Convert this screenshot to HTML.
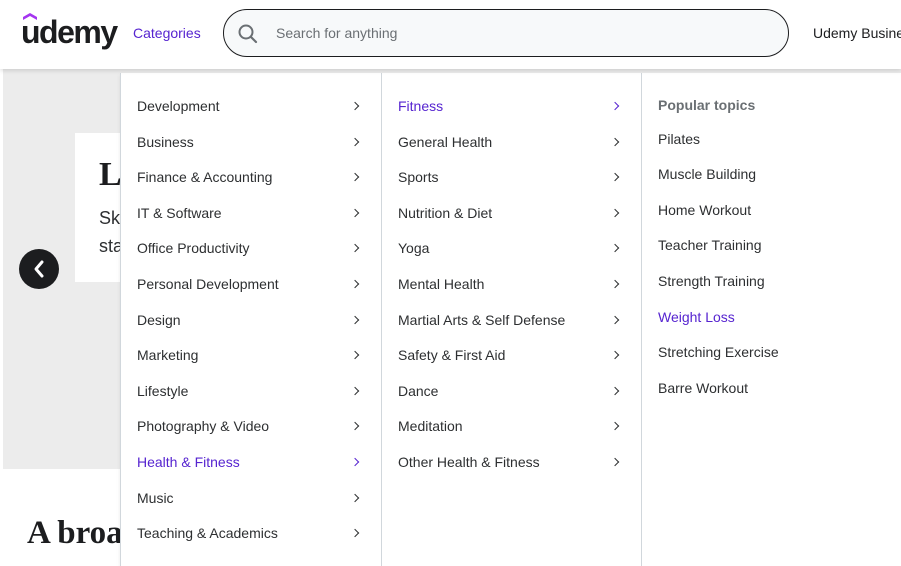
<!DOCTYPE html>
<html><head><meta charset="utf-8"><style>
*{margin:0;padding:0;box-sizing:border-box}
body{width:901px;height:566px;overflow:hidden;background:#fff;font-family:"Liberation Sans",sans-serif;position:relative;color:#2d2f31}
.hdr{position:absolute;left:0;top:0;width:901px;height:69px;background:#fff;box-shadow:0 2px 4px rgba(0,0,0,.12);z-index:3}
.logo{position:absolute;left:21px;top:14px;font-size:32px;font-weight:bold;letter-spacing:-1.5px;color:#1c1d1f}
.cat{position:absolute;left:133px;top:25px;font-size:14px;color:#5624d0}
.search{position:absolute;left:223px;top:9px;width:566px;height:48px;border:1px solid #1c1d1f;border-radius:24px;background:#f7f9fa}
.search span{position:absolute;left:52px;top:15px;font-size:14px;color:#6a6f73}
.ub{position:absolute;left:813px;top:25px;font-size:14px;color:#1c1d1f;white-space:nowrap}
.hero{position:absolute;left:3px;top:69px;width:898px;height:400px;background:#ececec}
.card{position:absolute;left:75px;top:133px;width:60px;height:149px;background:#fff}
.big{position:absolute;left:99px;top:156px;font-family:"Liberation Serif",serif;font-weight:bold;font-size:34px;color:#1c1d1f}
.sk{position:absolute;left:99px;font-size:18px;color:#2d2f31}
.prev{position:absolute;left:19px;top:249px;width:40px;height:40px;border-radius:50%;background:#1c1d1f}
.h2{position:absolute;left:27px;top:515px;font-family:"Liberation Serif",serif;font-weight:bold;font-size:33px;color:#1c1d1f}
.col{position:absolute;top:73px;height:493px;background:#fff;border-left:1px solid #d1d7dc}
.it{position:absolute;font-size:14px;color:#2d2f31;white-space:nowrap;line-height:16px}
.p{color:#5624d0}
.ch{position:absolute;width:6px;height:6px;border-top:1.5px solid #2d2f31;border-right:1.5px solid #2d2f31;transform:rotate(45deg)}
.chp{border-color:#5624d0}
</style></head><body>
<div class="hero"></div>
<div class="card"></div>
<div class="big">L</div>
<div class="sk" style="top:208px">Sk</div>
<div class="sk" style="top:236px">sta</div>
<div class="prev"><svg width="40" height="40"><path d="M23 13l-6 7 6 7" stroke="#fff" stroke-width="3" fill="none" stroke-linecap="round" stroke-linejoin="round"/></svg></div>
<div class="h2">A broa</div>
<div class="hdr">
<div class="logo">udemy<svg style="position:absolute;left:2px;top:-1px" width="14" height="8"><path d="M0 7V4L7 0l7 4v3L7 3z" fill="#a435f0"/></svg></div>
<div class="cat">Categories</div>
<div class="search"><svg style="position:absolute;left:13px;top:13px" width="22" height="22"><circle cx="9" cy="9" r="6.5" stroke="#6a6f73" stroke-width="2" fill="none"/><path d="M14 14l5 5" stroke="#6a6f73" stroke-width="2.2" stroke-linecap="round"/></svg><span>Search for anything</span></div>
<div class="ub">Udemy Business</div>
</div>
<div class="col" style="left:120px;width:262px;box-shadow:0 2px 4px rgba(0,0,0,.08)"></div>
<div class="col" style="left:381px;width:261px"></div>
<div class="col" style="left:641px;width:260px"></div>
<div id="m"></div>
<script>
var c1=["Development","Business","Finance & Accounting","IT & Software","Office Productivity","Personal Development","Design","Marketing","Lifestyle","Photography & Video","Health & Fitness","Music","Teaching & Academics"];
var c2=["Fitness","General Health","Sports","Nutrition & Diet","Yoga","Mental Health","Martial Arts & Self Defense","Safety & First Aid","Dance","Meditation","Other Health & Fitness"];
var c3=["Pilates","Muscle Building","Home Workout","Teacher Training","Strength Training","Weight Loss","Stretching Exercise","Barre Workout"];
var h="";
function y(i){return 106+i*35.6;}
c1.forEach(function(t,i){var p=i==10;h+='<div class="it'+(p?' p':'')+'" style="left:137px;top:'+(y(i)-8)+'px">'+t.replace('&','&amp;')+'</div><div class="ch'+(p?' chp':'')+'" style="left:352px;top:'+(y(i)-3)+'px"></div>';});
c2.forEach(function(t,i){var p=i==0;h+='<div class="it'+(p?' p':'')+'" style="left:398px;top:'+(y(i)-8)+'px">'+t.replace('&','&amp;')+'</div><div class="ch'+(p?' chp':'')+'" style="left:612px;top:'+(y(i)-3)+'px"></div>';});
h+='<div class="it" style="left:658px;top:97px;font-weight:bold;color:#6a6f73">Popular topics</div>';
c3.forEach(function(t,i){var p=i==5;h+='<div class="it'+(p?' p':'')+'" style="left:658px;top:'+(y(i+1)-3-8)+'px">'+t+'</div>';});
document.getElementById('m').innerHTML=h;
</script>
</body></html>
